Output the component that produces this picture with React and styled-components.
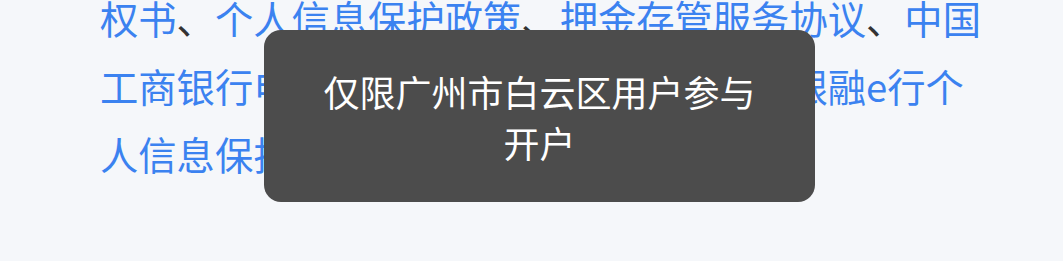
import React from "react"
import styled, { createGlobalStyle } from "styled-components"

const GlobalStyle = createGlobalStyle`
  html, body {
    margin: 0;
    padding: 0;
    background: #f5f7fa;
    overflow: hidden;
  }
  body {
    font-family: "Noto Sans CJK SC", "Noto Sans", sans-serif;
  }
`

const Page = styled.div`
  height: 261px;
  overflow: hidden;
`

const Agreement = styled.p`
  margin: -16px 0 0;
  padding: 0 0 0 100px;
  width: 890px;
  font-size: 38.3px;
  line-height: 68px;
  color: #333;
`

const Link = styled.a`
  color: #3b82f0;
  text-decoration: none;
`

const Toast = styled.div`
  position: fixed;
  top: 30px;
  left: 264px;
  width: 551px;
  box-sizing: border-box;
  padding: 36px 56px 34px;
  border-radius: 17px;
  background: #4c4c4c;
  color: #fff;
  font-size: 36px;
  line-height: 51px;
  text-align: center;
`

const links = [
  "权书",
  "个人信息保护政策",
  "押金存管服务协议",
  "中国工商银行电子银行个人客户服务协议",
  "工银融e行个人信息保护政策",
]

export default function App() {
  return (
    <Page>
      <GlobalStyle />
      <Agreement>
        {links.map((l, i) => (
          <React.Fragment key={l}>
            <Link>{l}</Link>
            {i < links.length - 1 && "、"}
          </React.Fragment>
        ))}
      </Agreement>
      <Toast>仅限广州市白云区用户参与开户</Toast>
    </Page>
  )
}
